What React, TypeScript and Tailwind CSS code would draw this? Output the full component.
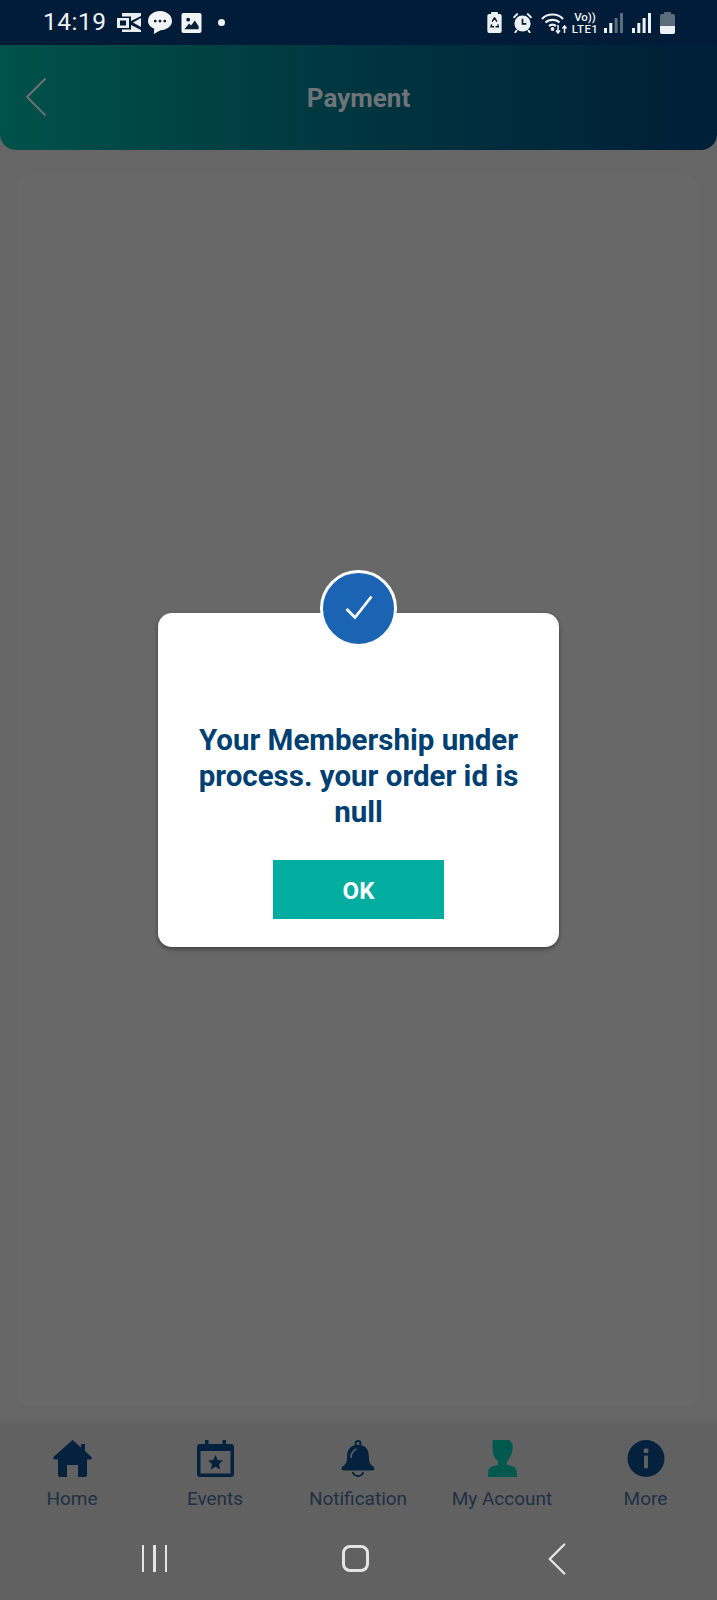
import { ChevronLeft } from "lucide-react";

const font = { fontFamily: "Roboto, sans-serif" };

const navItems = [
  { label: "Home", icon: "home" },
  { label: "Events", icon: "events" },
  { label: "Notification", icon: "bell" },
  { label: "My Account", icon: "account" },
  { label: "More", icon: "more" },
];

const NavIcon = ({ name }: { name: string }) => {
  if (name === "home") {
    return (
      <svg width="39" height="37" viewBox="0 0 39 37" fill="#04223e">
        <path d="M19.500 0 L28 7.500 V4 H32 V11 L38.500 17 Q39.500 19.500 37 19.500 H34 V35 Q34 37 32 37 H25 V25 H14 V37 H7 Q5 37 5 35 V19.500 H2 Q-0.500 19.500 0.500 17 Z" />
      </svg>
    );
  }
  if (name === "events") {
    return (
      <svg width="37" height="37" viewBox="0 0 37 37" fill="#04223e">
        <path fillRule="evenodd" d="M8 0 H11.500 V4 H25.500 V0 H29 V4 H34 Q37 4 37 7 V34 Q37 37 34 37 H3 Q0 37 0 34 V7 Q0 4 3 4 H8 Z M3.500 11 V33.500 H33.500 V11 Z" />
        <path d="M18.500 15 L20.700 20 L26 20.500 L22 24 L23.200 29.500 L18.500 26.700 L13.800 29.500 L15 24 L11 20.500 L16.300 20 Z" />
      </svg>
    );
  }
  if (name === "bell") {
    return (
      <svg width="34" height="37" viewBox="0 0 34 37" fill="#04223e">
        <circle cx="17" cy="3.500" r="2.500" fill="none" stroke="#04223e" strokeWidth="1.800" />
        <path d="M17 5 C26 5 28 11 28 18 C28 23 30 25 33 27 Q34.500 30.500 31 30.500 H3 Q-0.500 30.500 1 27 C4 25 6 23 6 18 C6 11 8 5 17 5 Z" />
        <path d="M11.500 32 Q13 36 17 36 Q21 36 22.500 32" fill="none" stroke="#04223e" strokeWidth="1.800" />
        <path d="M10 18 C10 13 12 10.500 15.500 9" fill="none" stroke="#566470" strokeWidth="1.500" />
      </svg>
    );
  }
  if (name === "account") {
    return (
      <svg width="29" height="37" viewBox="0 0 29 37" fill="#00584f">
        <path d="M5 0 H21 L24.500 4 Q25 10 23.500 14 Q22 19 19 21 V25 Q27.500 26 28.500 30 Q29 33 29 37 H0 Q0 33 0.500 30 Q1.500 26 10 25 V21 Q6 18 5 13 Q4 6 5 0 Z" />
      </svg>
    );
  }
  return (
    <svg width="38" height="37" viewBox="0 0 38 38">
      <circle cx="19" cy="19" r="19" fill="#04223e" />
      <circle cx="19" cy="11" r="2.600" fill="#616161" />
      <rect x="17" y="16" width="4" height="13" rx="0.500" fill="#616161" />
    </svg>
  );
};

const SignalBars = ({ dim }: { dim?: boolean }) => (
  <svg width="19" height="20" viewBox="0 0 19 20">
    <rect x="0" y="15" width="3" height="5" fill="#eef1f4" />
    <rect x="5.300" y="10" width="3" height="10" fill="#eef1f4" />
    <rect x="10.600" y="5" width="3" height="15" fill={dim ? "#5d6c7a" : "#eef1f4"} />
    <rect x="16" y="0" width="3" height="20" fill={dim ? "#5d6c7a" : "#eef1f4"} />
  </svg>
);

const StatusLeft = () => (
  <div className="flex items-center">
    <span className="text-[24.5px] leading-none text-[#eef1f4] tracking-[0.5px]" style={font}>14:19</span>
    <svg className="ml-[10px]" width="24" height="19" viewBox="0 0 24 19" fill="#e9edf0">
      <path fillRule="evenodd" d="M0 5 H12 V15 H0 Z M3 7.500 V12.500 H9 V7.500 Z" />
      <path d="M5 0 H24 V3 L14 8 V3.500 H5 Z M16 9.500 L24 5 V14 Z M5 16.500 H14 V12 L24 17 V19 H5 Z" />
    </svg>
    <svg className="ml-[7px]" width="24" height="23" viewBox="0 0 25 24">
      <path d="M12.500 0 C19.500 0 25 4.500 25 10.500 C25 16 19.500 20 13 20 L6 24 L6.500 18.500 C2.500 17 0 14 0 10.500 C0 4.500 5.500 0 12.500 0 Z" fill="#f1f3f5" />
      <circle cx="7.500" cy="10.500" r="1.500" fill="#0a2038" />
      <circle cx="12.500" cy="10.500" r="1.500" fill="#0a2038" />
      <circle cx="17.500" cy="10.500" r="1.500" fill="#0a2038" />
    </svg>
    <svg className="ml-[9px]" width="21" height="20" viewBox="0 0 21 21">
      <rect width="21" height="21" rx="2" fill="#f1f3f5" />
      <circle cx="7" cy="7" r="2" fill="#0a2038" />
      <path d="M3 17 L8 11 L10 13 L14 8 L18 14 V17 Z" fill="#0a2038" />
    </svg>
    <span className="ml-[16px] h-[7px] w-[7px] rounded-full bg-[#f1f3f5]" />
  </div>
);

const StatusRight = () => (
  <div className="flex items-center">
    <svg width="15" height="21" viewBox="0 0 15 22">
      <path d="M4 0 H11 V2 H13 Q15 2 15 4 V20 Q15 22 13 22 H2 Q0 22 0 20 V4 Q0 2 2 2 H4 Z" fill="#eef1f4" />
      <path d="M7.500 6 L10 10 M5 10 L7.500 6 M4.500 13 L3.800 15.500 H7 M11 13 L11.500 15.500 H8.500" stroke="#0a2038" strokeWidth="1.500" fill="none" />
    </svg>
    <svg className="ml-[11px]" width="19" height="20" viewBox="0 0 20 21">
      <circle cx="10" cy="11" r="8.500" fill="#eef1f4" />
      <path d="M10 6 V11.500 H14" stroke="#0a2038" strokeWidth="1.800" fill="none" />
      <path d="M0.500 5 L5 0.500 M19.500 5 L15 0.500 M4 18 L2 21 M16 18 L18 21" stroke="#eef1f4" strokeWidth="2" fill="none" />
    </svg>
    <svg className="ml-[9px]" width="27" height="22" viewBox="0 0 27 22" fill="none" stroke="#eef1f4" strokeWidth="2.200">
      <path d="M1 7 C6 1 17 1 22 7" />
      <path d="M4.500 10.500 C8 7 15 7 18.500 10.500" />
      <path d="M8 14 C10 12.500 13 12.500 15 14" />
      <circle cx="11.500" cy="17" r="0.800" fill="#eef1f4" />
      <path d="M17 13 V21 M15 18.500 L17 21 L19 18.500 M23.500 21 V14 M21.500 16.500 L23.500 14 L25.500 16.500" strokeWidth="1.500" />
    </svg>
    <div className="ml-[4px] flex w-[26px] flex-col items-center font-medium text-[#eef1f4]" style={font}>
      <span className="h-[12px] text-[11.5px] leading-[12px]">Vo))</span>
      <span className="h-[12px] text-[11.5px] leading-[12px] tracking-[0.4px]">LTE1</span>
    </div>
    <div className="ml-[6px]">
      <SignalBars dim />
    </div>
    <div className="ml-[9px]">
      <SignalBars />
    </div>
    <svg className="ml-[9px]" width="15" height="22" viewBox="0 0 15 22">
      <path d="M4 0 H11 V2 H13 Q15 2 15 4 V20 Q15 22 13 22 H2 Q0 22 0 20 V4 Q0 2 2 2 H4 Z" fill="#5d6c7a" />
      <path d="M0 14 H15 V20 Q15 22 13 22 H2 Q0 22 0 20 Z" fill="#eef1f4" />
    </svg>
  </div>
);

export default function App() {
  return (
    <div className="relative flex h-[1600px] w-[717px] flex-col overflow-hidden bg-[#666666]" style={font}>
      <div className="flex h-[45px] shrink-0 items-center justify-between bg-[#001c38] pl-[43px] pr-[42px]">
        <StatusLeft />
        <StatusRight />
      </div>

      <header className="relative flex h-[105px] shrink-0 items-center justify-center rounded-b-[16px] bg-gradient-to-r from-[#00524a] via-[#00353f] via-50% to-[#001e38]">
        <ChevronLeft className="absolute left-0 top-[16px] h-[72px] w-[72px] text-[#707070]" strokeWidth={0.6} />
        <h1 className="pt-[2px] text-[26px] font-bold text-[#6f7478]">Payment</h1>
      </header>

      <main className="relative flex-1 pl-[17px] pr-[19px] pt-[25px] pb-[16px]">
        <div className="h-full rounded-[12px] bg-[#686868]" />
      </main>

      <nav className="shrink-0 bg-[#616161]">
        <div className="grid h-[102px] grid-cols-[144px_142px_144px_144px_143px] pt-[17px]">
          {navItems.map((item) => (
            <div key={item.label} className="flex flex-col items-center">
              <div className="flex h-[37px] items-end">
                <NavIcon name={item.icon} />
              </div>
              <span className="mt-[10px] text-[19px] leading-[24px] text-[#1f3043]">{item.label}</span>
            </div>
          ))}
        </div>
        <div className="flex h-[75px] items-center pb-[8px] pl-[54px]">
          <div className="flex w-[201px] justify-center gap-[9px]">
            <span className="h-[27px] w-[2.500px] bg-[#e4e4e4]" />
            <span className="h-[27px] w-[2.500px] bg-[#e4e4e4]" />
            <span className="h-[27px] w-[2.500px] bg-[#e4e4e4]" />
          </div>
          <div className="flex w-[201px] justify-center">
            <span className="h-[27px] w-[27px] rounded-[8px] border-[3px] border-[#e4e4e4]" />
          </div>
          <div className="flex w-[201px] justify-center">
            <ChevronLeft className="h-[58px] w-[58px] text-[#e4e4e4]" strokeWidth={1} />
          </div>
        </div>
      </nav>

      <div className="absolute inset-x-0 top-[570px] flex flex-col items-center">
        <div className="relative z-10 flex h-[77px] w-[77px] items-center justify-center rounded-full border-[3px] border-white bg-[#1b63b3]">
          <svg className="mb-[2px]" width="28" height="25" viewBox="0 0 28 25" fill="none" stroke="#ffffff" strokeWidth="2.800">
            <path d="M1.500 14 L10 22.500 L26.500 1.500" />
          </svg>
        </div>
        <div className="mt-[-34px] flex h-[334px] w-[401px] flex-col items-center rounded-[14px] bg-white pt-[109px] shadow-[0_2px_4px_rgba(0,0,0,0.4)]">
          <p className="w-[350px] text-center text-[29.5px] font-bold leading-[36px] text-[#003f72]">
            Your Membership under process. your order id is null
          </p>
          <button className="mt-[30px] h-[59px] w-[171px] bg-[#00ad9f] pt-[2px] text-[24px] font-bold text-white">OK</button>
        </div>
      </div>
    </div>
  );
}
